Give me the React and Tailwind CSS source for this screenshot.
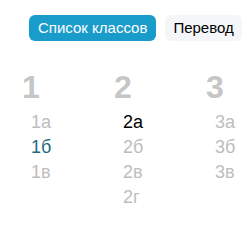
import React from 'react';

const columns = [
    { num: '1', items: ['1а', '1б', '1в'] },
    { num: '2', items: ['2а', '2б', '2в', '2г'] },
    { num: '3', items: ['3а', '3б', '3в'] },
];

const active = { '2а': 'text-black', '1б': 'text-[#1d6b80]' };

const App = () => {
    return (
        <div className="w-[246px] h-[226px] overflow-hidden bg-white font-['Liberation_Sans',Arial,sans-serif]">
            <div className="flex gap-[9px] pl-[29px] pt-[15px]">
                <button className="h-[26px] px-[9px] rounded-[6px] bg-[#1a9ccb] text-white text-[15px] leading-[18px]">
                    Список классов
                </button>
                <button className="h-[26px] px-2 rounded-[6px] bg-[#f4f6f7] text-black text-[15px] leading-[18px]">
                    Перевод
                </button>
            </div>

            <div className="flex pl-[22px] pt-[30px]">
                {columns.map((col, i) => (
                    <div key={col.num} className={i < 2 ? 'w-[92px] shrink-0' : 'flex-1'}>
                        <div className="text-[32px] leading-[32px] font-bold text-[#c6c6c6]">{col.num}</div>
                        <ul className="mt-[7px] pl-[9px]">
                            {col.items.map((item) => (
                                <li key={item} className={`text-[18px] leading-[25px] ${active[item] || 'text-[#bdbdbd]'}`}>
                                    {item}
                                </li>
                            ))}
                        </ul>
                    </div>
                ))}
            </div>
        </div>
    );
};

export default App;
